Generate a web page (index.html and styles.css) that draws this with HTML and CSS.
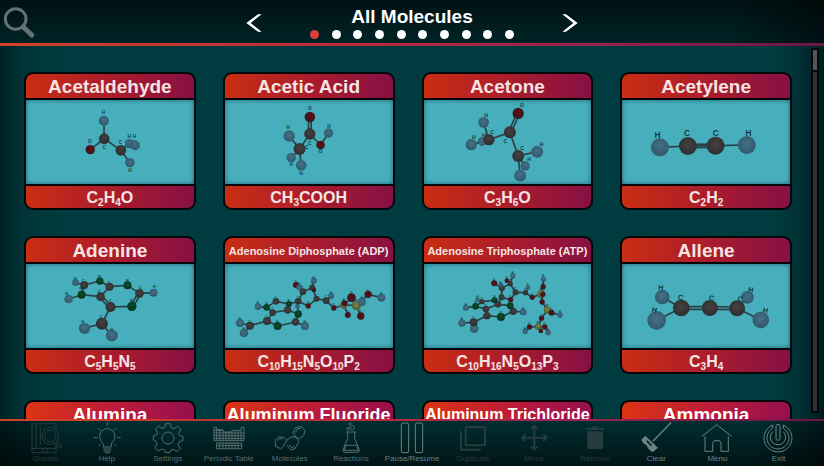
FILE: index.html
```html
<!DOCTYPE html>
<html lang="en">
<head>
<meta charset="utf-8">
<title>All Molecules</title>
<link rel="stylesheet" href="styles.css">
</head>
<body>
<header class="topbar">
  <button class="search" aria-label="Search">
    <svg viewBox="0 0 96 96"><circle cx="38" cy="36" r="31" fill="none" stroke="currentColor" stroke-width="9"/><path d="M61 60L86 84" stroke="currentColor" stroke-width="15" stroke-linecap="round"/></svg>
  </button>
  <nav class="pager" aria-label="Pages">
    <button class="arrow" aria-label="Previous"><svg viewBox="0 0 48 54"><path d="M36 1H47L14 27L47 53H36L1 27Z" fill="currentColor"/></svg></button>
    <div class="pager-middle">
      <h1>All Molecules</h1>
      <div class="dots"><i class="dot on"></i><i class="dot"></i><i class="dot"></i><i class="dot"></i><i class="dot"></i><i class="dot"></i><i class="dot"></i><i class="dot"></i><i class="dot"></i><i class="dot"></i></div>
    </div>
    <button class="arrow" aria-label="Next"><svg viewBox="0 0 48 54"><path d="M12 1H1L34 27L1 53H12L47 27Z" fill="currentColor"/></svg></button>
  </nav>
</header>

<main class="browser">
  <section class="cards">
    <article class="card"><h2>Acetaldehyde</h2><svg class="model" data-molecule="acetaldehyde" viewBox="33 105 504 252"></svg><p>C<sub>2</sub>H<sub>4</sub>O</p></article>
    <article class="card"><h2>Acetic Acid</h2><svg class="model" data-molecule="aceticAcid" viewBox="29 105 504 252"></svg><p>CH<sub>3</sub>COOH</p></article>
    <article class="card"><h2>Acetone</h2><svg class="model" data-molecule="acetone" viewBox="24 105 504 252"></svg><p>C<sub>3</sub>H<sub>6</sub>O</p></article>
    <article class="card"><h2>Acetylene</h2><svg class="model" data-molecule="acetylene" viewBox="35 105 504 252"></svg><p>C<sub>2</sub>H<sub>2</sub></p></article>
    <article class="card"><h2>Adenine</h2><svg class="model" data-molecule="adenine" viewBox="33 102 504 252"></svg><p>C<sub>5</sub>H<sub>5</sub>N<sub>5</sub></p></article>
    <article class="card"><h2 class="small">Adenosine Diphosphate (ADP)</h2><svg class="model" data-molecule="adp" viewBox="29 102 504 252"></svg><p>C<sub>10</sub>H<sub>15</sub>N<sub>5</sub>O<sub>10</sub>P<sub>2</sub></p></article>
    <article class="card"><h2 class="small">Adenosine Triphosphate (ATP)</h2><svg class="model" data-molecule="atp" viewBox="24 102 504 252"></svg><p>C<sub>10</sub>H<sub>16</sub>N<sub>5</sub>O<sub>13</sub>P<sub>3</sub></p></article>
    <article class="card"><h2>Allene</h2><svg class="model" data-molecule="allene" viewBox="35 102 504 252"></svg><p>C<sub>3</sub>H<sub>4</sub></p></article>
    <article class="card bright"><h2>Alumina</h2></article>
    <article class="card bright"><h2 class="large">Aluminum Fluoride</h2></article>
    <article class="card bright"><h2 class="medium">Aluminum Trichloride</h2></article>
    <article class="card bright"><h2>Ammonia</h2></article>
  </section>
  <div class="scrollbar"><div class="thumb"></div></div>
</main>

<footer class="toolbar">
  <button class="tool" disabled><svg viewBox="87 81 96 96"><path d="M93 86H165V106M93 86V173H165V155M105 86V160M93 160H165M126 160V173M138 160V173M165 145V160M118 98V148"/><circle cx="148" cy="123" r="25"/><circle cx="148" cy="123" r="17"/><path d="M164 142L178 160L183 155L169 138"/></svg><span>Guests</span></button>
  <button class="tool"><svg viewBox="271 81 96 96"><path d="M308 156V148C306 140 297 138 297 124A23 23 0 0 1 343 124C343 138 333 140 332 148V156ZM308 162H332M309 168H331M313 173H327M320 82V93M279 128H291M349 128H360M292 99L300 107M348 99L340 107M295 152L301 146M346 152L340 146"/></svg><span>Help</span></button>
  <button class="tool"><svg viewBox="455 81 96 96"><path d="M496 86H510L513 98L521 101L532 94L542 104L535 115L538 122L548 125V137L537 140L533 149L540 160L530 170L519 163L511 166L508 173H496L493 165L484 162L474 168L464 158L470 147L467 139L459 135V123L468 120L472 112L465 102L475 93L485 100L493 97Z"/><circle cx="503" cy="129" r="18"/></svg><span>Settings</span></button>
  <button class="tool"><svg viewBox="638 81 96 96"><path d="M641 97V137H731V97H722V106H695V111H668V104H649V97ZM641 106H668M641 114H731M641 122H731M641 130H731M649 104V137M658 104V137M668 111V137M677 111V137M686 111V137M695 111V137M704 106V137M713 106V137M722 106V137M649 144H724V161H649ZM649 152H724M658 144V161M668 144V161M677 144V161M686 144V161M695 144V161M704 144V161M713 144V161"/></svg><span>Periodic Table</span></button>
  <button class="tool"><svg viewBox="822 81 96 96"><path d="M826 136L836 126H850L860 136L850 154L842 161L826 154ZM860 136L873 126H887L897 139L886 160L874 165L860 151M887 126L879 113L886 98L904 94L915 106L911 122L898 131L887 126M832 137L838 131H848M867 150L875 158L884 155M886 113L891 102L902 100"/></svg><span>Molecules</span></button>
  <button class="tool"><svg viewBox="1004 81 96 96"><path d="M1037 111H1067M1042 112V131L1028 165Q1027 172 1034 172H1071Q1078 172 1077 165L1063 131V112M1036 151H1069L1073 166H1032Z"/><circle cx="1043" cy="101" r="4"/><circle cx="1056" cy="98" r="6"/><circle cx="1049" cy="87" r="3"/></svg><span>Reactions</span></button>
  <button class="tool bright-tool"><svg viewBox="1188 81 96 96"><rect x="1204" y="84" width="22" height="89" rx="5"/><rect x="1246" y="84" width="22" height="89" rx="5"/></svg><span>Pause/Resume</span></button>
  <button class="tool" disabled><svg viewBox="135 81 96 96"><g class="heavy"><rect x="161" y="96" width="58" height="55" rx="3"/><path d="M147 107V164H206"/></g></svg><span>Duplicate</span></button>
  <button class="tool" disabled><svg viewBox="318 81 96 96"><g class="heavy"><path d="M367 92V164M330 128H404M357 102L367 92L377 102M357 154L367 164L377 154M340 118L330 128L340 138M394 118L404 128L394 138"/></g></svg><span>Move</span></button>
  <button class="tool" disabled><svg viewBox="501 81 96 96"><path class="solid" d="M523 98H540L543 94H556L559 98H576V105H523ZM526 109H573V157Q573 162 568 162H531Q526 162 526 157Z"/></svg><span>Remove</span></button>
  <button class="tool bright-tool"><svg viewBox="684 81 96 96"><path class="solid" d="M776 81L721 137L724 140L779 84ZM700 122L738 158L723 171Q709 166 704 151Q693 147 688 134ZM706 136L703 140L717 154L720 150Z" fill-rule="evenodd"/></svg><span>Clear</span></button>
  <button class="tool bright-tool"><svg viewBox="868 81 96 96"><path d="M871 124L915 89L960 124M880 124V169H903V145Q904 136 916 136Q928 136 928 145V169H950V124"/></svg><span>Menu</span></button>
  <button class="tool bright-tool"><svg viewBox="1051 81 96 96"><rect x="1093" y="88" width="12" height="48" rx="6"/><path d="M1083 90A42 42 0 1 0 1115 90V100A33 33 0 1 1 1083 100ZM1083 110A23 23 0 1 0 1115 110"/></svg><span>Exit</span></button>
</footer>
<script src="molecules.js"></script>
</body>
</html>
```
FILE: molecules.js
```js
// atoms: [element, x, y, radius, labelX, labelY]; bonds: [atom, atom, order]
const molecules = {
  acetaldehyde: { size: 14, atoms: [
    ["H",267,167,15,266,142],["C",268,221,16,268,247],["O",226,254,14,225,230],["C",318,256,16,317,231],
    ["H",344,236,14,343,213],["H",360,241,15,359,215],["H",345,293,14,345,316]],
    bonds: [[0,1],[1,2],[1,3],[3,4],[4,5],[3,6]] },
  aceticAcid: { size: 14, atoms: [
    ["O",284,156,16,284,131],["C",284,207,17,284,234],["H",222,213,17,219,187],["C",253,252,18,275,246],
    ["O",316,240,13,316,260],["H",340,204,14,341,183],["H",228,278,14,228,299],["H",258,301,16,258,324]],
    bonds: [[0,1,2],[1,3],[1,4],[4,5],[2,3],[3,6],[3,7]] },
  acetone: { size: 16, atoms: [
    ["O",307,145,17,318,119],["C",282,202,18,269,228],["H",203,172,16,211,149],["H",199,229,13,204,210],
    ["C",219,224,17,229,201],["H",166,239,17,174,215],["C",307,273,18,319,249],["H",364,260,18,377,236],
    ["H",328,303,14,340,282],["H",313,332,18,0,0]],
    bonds: [[0,1,2],[1,4],[2,4],[4,5],[1,6],[6,7],[6,8],[6,9]] },
  acetylene: { size: 25, atoms: [
    ["H",149,247,27,142,210],["C",233,243,27,230,204],["C",316,242,27,317,203],["H",410,240,27,415,203]],
    bonds: [[0,1],[1,2,3],[2,3]] },
  adenine: { size: 12, atoms: [
    ["H",182,158,10,181,146],["C",208,165,12,205,151],["N",255,153,11,254,139],["C",284,170,12,283,157],
    ["N",338,166,12,338,152],["C",374,190,13,377,174],["H",416,188,12,418,171],["N",200,194,12,198,177],
    ["H",161,207,13,155,192],["C",257,200,13,253,185],["N",351,229,14,350,212],["C",287,231,15,286,213],
    ["C",261,281,18,258,260],["H",209,295,17,203,275],["H",291,317,18,290,298]],
    bonds: [[0,1],[1,2],[2,3],[3,4],[4,5],[5,6],[1,7],[7,8],[7,9],[3,9],[5,10,2],[10,11],[9,11,2],[11,12],[12,13],[12,14]] },
  adp: { size: 9, atoms: [
    ["H",74,279,12],["H",86,309,13],["C",104,287,12],["C",155,273,12],["N",187,288,12],["C",241,276,11],["H",269,288,12],
    ["N",249,252,11],["C",217,240,11],["C",172,248,10],["N",154,232,10],["H",128,230,10],["C",182,214,10],["N",221,222,9],
    ["C",249,214,10],["H",247,229,7],["C",263,185,10],["O",242,165,9],["H",252,172,9],["C",291,173,9],["O",296,180,7],["H",296,152,9],
    ["C",304,206,9],["O",279,228,8],["C",333,212,10],["H",348,198,9],["O",356,234,8],["P",386,225,11],["O",388,220,9],["O",398,255,9],
    ["O",409,203,13],["P",424,226,14],["H",440,216,12],["O",437,258,11],["O",459,193,11],["H",499,203,12]],
    bonds: [[0,2],[1,2],[2,3],[3,4],[4,5],[5,6],[5,7],[7,8],[8,9],[9,3],[9,10],[10,11],[10,12],[12,13],[13,8],[13,14],[14,15],[14,16],[16,17],[16,18],[16,19],[19,21],[19,20],[19,22],[22,23],[23,14],[22,24],[24,25],[24,26],[26,27],[27,28],[27,29],[27,30],[27,31],[30,31],[31,32],[31,33],[31,34],[34,35]] },
  atp: { size: 9, atoms: [
    ["H",138,279,11],["H",175,296,13],["C",173,277,12],["C",213,257,11],["N",255,261,12],["C",292,244,11],["H",322,246,10],
    ["N",283,227,10],["C",246,223,10],["C",210,237,10],["N",179,229,10],["H",150,233,9],["C",198,215,8],["H",185,209,7],["N",236,211,9],
    ["C",257,202,9],["C",258,175,9],["O",235,160,9],["H",254,165,7],["C",283,161,8],["O",273,152,7],["H",291,137,8],
    ["C",299,187,9],["O",284,209,8],["C",329,188,8],["H",336,173,7],["O",349,202,8],["P",376,192,12],["O",382,170,8],["H",383,147,8],
    ["O",379,216,8],["P",395,240,11],["O",407,248,9],["H",433,255,8],["O",377,265,8],["P",367,290,10],["O",341,291,8],["H",328,304,8],
    ["O",387,291,8],["O",375,303,7],["H",397,308,8],["O",381,193,8]],
    bonds: [[0,2],[1,2],[2,3],[3,4],[4,5],[5,6],[5,7],[7,8],[8,9],[9,3],[9,10],[10,11],[10,12],[12,13],[12,14],[14,8],[8,15],[15,16],[16,17],[16,18],[16,19],[19,20],[19,21],[19,22],[22,23],[23,15],[22,24],[24,25],[24,26],[26,27],[27,28],[28,29],[27,30],[30,31],[31,32],[32,33],[31,34],[34,35],[35,36],[36,37],[35,38],[35,39],[38,40]] },
  allene: { size: 22, tilt: 12, atoms: [
    ["H",156,201,22,152,172],["H",139,271,28,132,239],["C",213,234,25,211,202],["C",299,234,24,304,204],
    ["H",412,202,19,422,179],["C",381,235,24,390,207],["H",452,270,25,466,241]],
    bonds: [[0,2],[1,2],[2,3,2],[3,5,2],[4,5],[5,6]] }
};

const NS = "http://www.w3.org/2000/svg";
const shades = {
  H: ["#457086", "#30596b"], C: ["#48403f", "#2c2f32"], O: ["#640a10", "#351c25"],
  N: ["#08502c", "#07321f"], P: ["#87873c", "#4c5b32"]
};

function add(parent, tag, attrs) {
  const node = document.createElementNS(NS, tag);
  for (const key in attrs) node.setAttribute(key, attrs[key]);
  parent.appendChild(node);
  return node;
}

document.querySelectorAll(".model").forEach(svg => {
  const name = svg.dataset.molecule;
  const { atoms, bonds, size, tilt = 0 } = molecules[name];
  const defs = add(svg, "defs", {});
  for (const el in shades) {
    const g = add(defs, "radialGradient", { id: name + el, cx: "50%", cy: "42%", r: "56%" });
    add(g, "stop", { offset: "0", "stop-color": shades[el][0] });
    add(g, "stop", { offset: "1", "stop-color": shades[el][1] });
  }
  for (const [i, j, order = 1] of bonds) {
    const [, x1, y1] = atoms[i], [, x2, y2] = atoms[j];
    const len = Math.hypot(x2 - x1, y2 - y1);
    const nx = (y1 - y2) / len, ny = (x2 - x1) / len;
    for (let k = 0; k < order; k++) {
      const d = (k - (order - 1) / 2) * (order === 3 ? 5 : 8);
      add(svg, "line", { class: "bond", x1: x1 + nx * d, y1: y1 + ny * d, x2: x2 + nx * d, y2: y2 + ny * d });
    }
  }
  for (const [el, x, y, r] of atoms) add(svg, "circle", { cx: x, cy: y, r, fill: `url(#${name}${el})` });
  for (const [el, x, y, r, lx = x - 1, ly = y - r] of atoms) {
    if (!lx) continue;
    add(svg, "text", {
      class: "atom-label", x: lx, y: ly + size * 0.36, "font-size": size,
      transform: `rotate(${tilt} ${lx} ${ly})`
    }).textContent = el;
  }
});
```
FILE: styles.css
```css
* { box-sizing: border-box; }

body {
  margin: 0;
  height: 100vh;
  display: grid;
  grid-template-rows: auto minmax(0, 1fr) auto;
  overflow: hidden;
  background: #003c3f;
  color: #fff;
  font-family: "Liberation Sans", Arial, sans-serif;
}

button {
  padding: 0;
  border: 0;
  background: none;
  color: inherit;
  font: inherit;
}

svg { display: block; }

.topbar {
  display: grid;
  grid-template-columns: 1fr auto 1fr;
  height: 46px;
  border-bottom: 3px solid;
  border-image: linear-gradient(90deg, #d04229, #b82a3e 45%, #982352 70%, #681745) 1;
  background:
    linear-gradient(90deg, transparent 88%, rgba(0, 0, 0, .5)),
    linear-gradient(#001214, #002326);
}

.search {
  width: 32px;
  height: 32px;
  margin: 7px 0 0 3px;
  color: #657172;
}

.pager {
  display: flex;
  align-items: flex-start;
  gap: 48px;
}

.arrow {
  width: 16px;
  height: 18px;
  margin-top: 14px;
}

.pager-middle { width: 204px; }

h1 {
  margin: 6px 0 3px;
  font-size: 19px;
  line-height: 21px;
  text-align: center;
}

.dots {
  display: flex;
  justify-content: space-between;
}

.dot {
  width: 9px;
  height: 9px;
  border-radius: 50%;
  background: #fff;
}

.dot.on { background: #d9403a; }

.browser {
  display: flex;
  overflow: hidden;
  background: linear-gradient(90deg, #002225, #003437 3%, #003c3f 8%, #003c3f 94%, #002b2e 98%, #001a1c);
}

.cards {
  flex: 1;
  display: grid;
  grid-template-columns: repeat(4, minmax(0, 1fr));
  grid-auto-rows: 138px;
  gap: 26px 27px;
  padding: 26px 19px 0 24px;
}

.card {
  display: flex;
  flex-direction: column;
  overflow: hidden;
  border: 2px solid #030608;
  border-radius: 9px;
  background: linear-gradient(90deg, #c92e12, #ac1c2c 50%, #861044);
  color: #f4e4e2;
  text-align: center;
}

.card.bright {
  background: linear-gradient(90deg, #dc3413, #be1d38 50%, #960f4f);
  color: #fff;
}

.card h2 {
  margin: 0;
  height: 24px;
  font-size: 19px;
  line-height: 26px;
  white-space: nowrap;
}

.card h2.large { font-size: 18px; }
.card h2.medium { font-size: 16px; }
.card h2.small { font-size: 11px; }

.card p {
  margin: 0;
  font-size: 16px;
  line-height: 24px;
  font-weight: bold;
}

.card sub {
  font-size: 10px;
  line-height: 0;
  vertical-align: -3px;
}

.model {
  flex: none;
  width: 100%;
  height: 88px;
  border: solid #030608;
  border-width: 2px 0;
  background: #47afbc;
  box-shadow: inset 0 0 5px #1d6670;
}

.bond {
  stroke: #2a4046;
  stroke-width: 5;
}

.atom-label {
  fill: #0c3d48;
  font-weight: bold;
  text-anchor: middle;
}

.scrollbar {
  width: 8px;
  margin: 2px 5px 6px 0;
  border: 2px solid #020809;
  background: #303030;
}

.thumb {
  height: 22px;
  border-bottom: 2px solid #020809;
  background: #555;
}

.toolbar {
  display: grid;
  grid-template-columns: repeat(13, minmax(0, 1fr));
  height: 47px;
  padding: 1px 15px 0;
  border-top: 2px solid;
  border-image: linear-gradient(90deg, #d04229, #b82a3e 45%, #982352 70%, #681745) 1;
  background:
    linear-gradient(90deg, rgba(0, 0, 0, .5), transparent 8%, transparent 92%, rgba(0, 0, 0, .5)),
    linear-gradient(#002e31, #001416);
}

.tool {
  display: flex;
  flex-direction: column;
  align-items: center;
  color: #566d70;
}

.tool.bright-tool { color: #6d8184; }
.tool:disabled { color: #263c3f; }

.tool svg {
  width: 32px;
  height: 32px;
  fill: none;
  stroke: currentColor;
  stroke-width: 3;
  stroke-linejoin: round;
}

.tool .heavy { stroke-width: 6; }

.tool .solid {
  fill: currentColor;
  stroke: none;
}

.tool span {
  font-size: 8px;
  line-height: 10px;
  white-space: nowrap;
}
```
